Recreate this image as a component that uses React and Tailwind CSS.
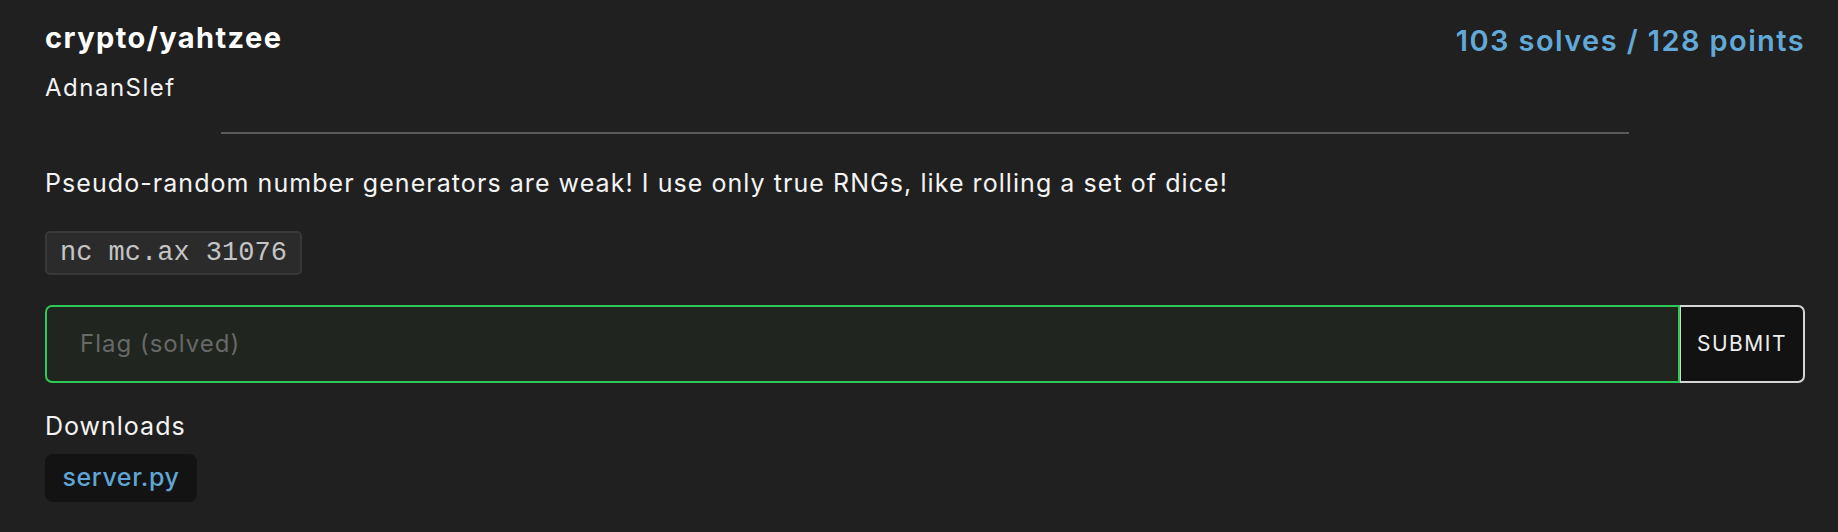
export default function App() {
  const sans = { fontFamily: "Inter, 'Noto Sans', sans-serif" };
  return (
    <div className="w-full h-[532px] bg-[#202020] pl-[45px] pr-[33px] text-[#f4f4f4]" style={sans}>
      <div className="flex justify-between items-start pt-[20px]">
        <div className="text-[29px] leading-[35px] font-bold tracking-[1.4px] text-white">crypto/yahtzee</div>
        <div className="mt-[3px] text-[29px] leading-[35px] font-semibold tracking-[1.4px] text-[#62a9d8]">103 solves / 128 points</div>
      </div>
      <div className="mt-[15px] text-[24px] leading-[29px] tracking-[1.5px]">AdnanSlef</div>
      <div className="mt-[30px] mx-auto w-4/5 h-[2px] bg-[#5a5a5a]"></div>
      <p className="mt-[34px] text-[25px] leading-[30px] tracking-[1.06px]">
        Pseudo-random number generators are weak! I use only true RNGs, like rolling a set of dice!
      </p>
      <div className="mt-[33px] flex">
        <div
          className="h-[44px] flex items-center px-[13px] bg-[#2b2b2b] border-2 border-[#383838] rounded-[5px] text-[27px] text-[#c4c4c4]"
          style={{ fontFamily: "'Liberation Mono', monospace" }}
        >
          nc mc.ax 31076
        </div>
      </div>
      <div className="mt-[30px] flex h-[78px]">
        <div className="flex-1 flex items-center bg-[#20251f] border-2 border-[#2fc955] rounded-l-[7px] pl-[33px] text-[24px] tracking-[1px] text-[#686868]">
          Flag (solved)
        </div>
        <div className="w-[125px] flex items-center justify-center bg-[#121212] border-2 border-l border-[#d6d6d6] rounded-r-[7px] text-[21px] tracking-[1.5px] text-[#eeeeee]">
          SUBMIT
        </div>
      </div>
      <div className="mt-[28px] text-[25px] leading-[30px] tracking-[1px]">Downloads</div>
      <div className="mt-[13px] flex">
        <div className="h-[48px] w-[152px] flex items-center justify-center bg-[#131313] rounded-[8px] text-[25px] font-medium tracking-[0.6px] text-[#5fa6d4]">
          server.py
        </div>
      </div>
    </div>
  );
}
